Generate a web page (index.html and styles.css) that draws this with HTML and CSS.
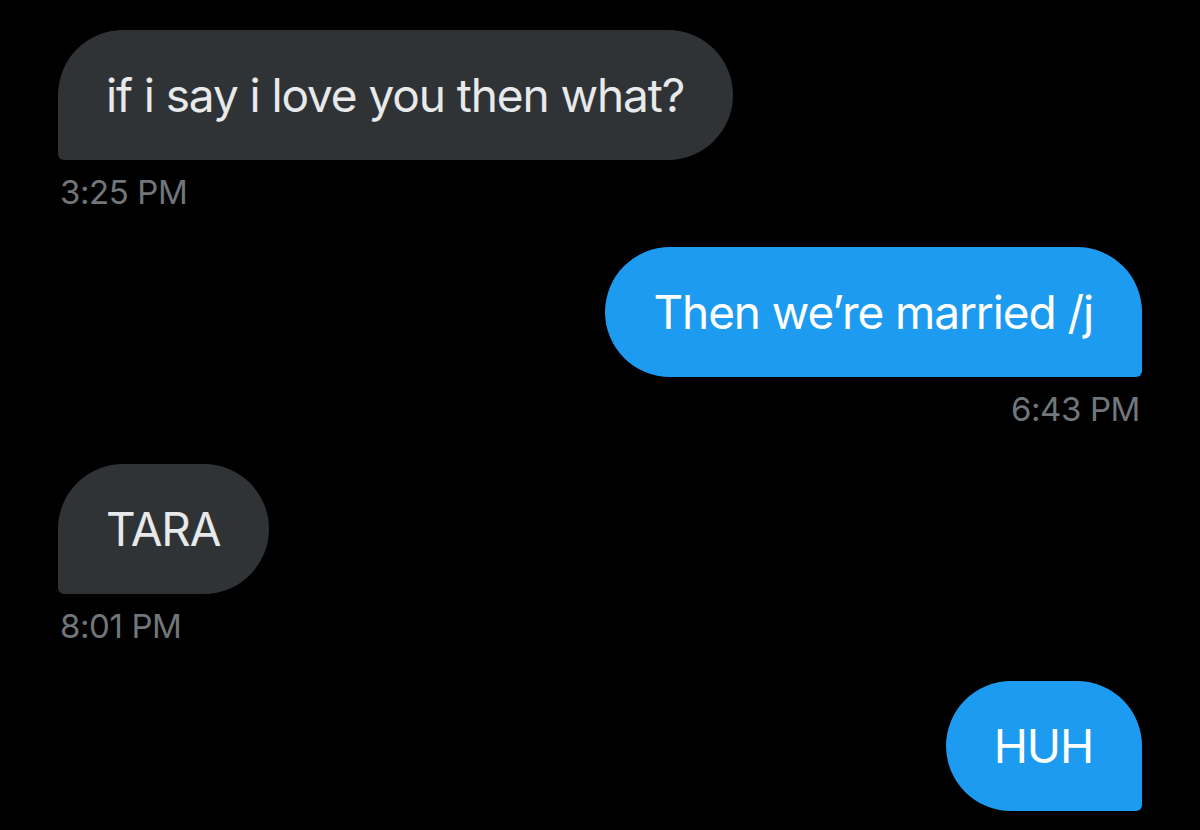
FILE: index.html
```html
<!DOCTYPE html>
<html lang="en">
<head>
<meta charset="utf-8">
<title>Messages</title>
<link rel="stylesheet" href="styles.css">
</head>
<body>
<main class="thread">
  <div class="msg received">
    <div class="bubble">if i say i love you then what?</div>
    <div class="time">3:25 PM</div>
  </div>
  <div class="msg sent">
    <div class="bubble">Then we’re married /j</div>
    <div class="time">6:43 PM</div>
  </div>
  <div class="msg received">
    <div class="bubble">TARA</div>
    <div class="time">8:01 PM</div>
  </div>
  <div class="msg sent last">
    <div class="bubble">HUH</div>
  </div>
</main>
</body>
</html>
```

FILE: styles.css
```css
html, body {
  margin: 0;
  padding: 0;
  background: #000;
  height: 100%;
  overflow: hidden;
}

.thread {
  display: flex;
  flex-direction: column;
  padding: 30px 58px 0;
  font-family: "Inter", "Roboto", "Liberation Sans", sans-serif;
}

.msg {
  display: flex;
  flex-direction: column;
  height: 217px;
}

.msg.last {
  height: auto;
}

.msg.received {
  align-items: flex-start;
}

.msg.sent {
  align-items: flex-end;
}

.bubble {
  box-sizing: border-box;
  height: 130px;
  padding: 0 49px 0 48px;
  display: flex;
  align-items: center;
  font-size: 46px;
  letter-spacing: -1.1px;
  border-radius: 65px;
  white-space: nowrap;
}

.received .bubble {
  background: #2f3336;
  color: #e7e9ea;
  border-bottom-left-radius: 6px;
}

.sent .bubble {
  background: #1d9bf0;
  color: #fff;
  border-bottom-right-radius: 6px;
}

.time {
  margin-top: 12px;
  font-size: 33px;
  line-height: 40px;
  color: #71767b;
  padding: 0 2px;
  letter-spacing: -0.4px;
}
```
